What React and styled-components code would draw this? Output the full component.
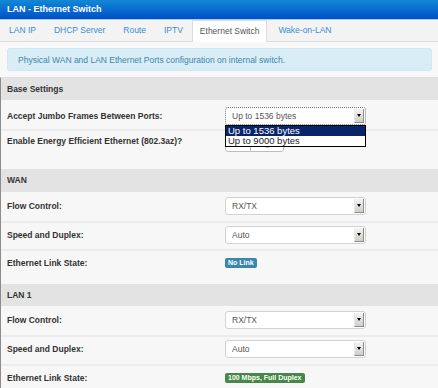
import React from 'react'
import styled, { createGlobalStyle } from 'styled-components'

const GlobalStyle = createGlobalStyle`
  body {
    margin: 0;
    background: #f8f8f8;
    font-family: 'Liberation Sans', Arial, sans-serif;
  }
`

const Page = styled.div`
  width: 438px;
  height: 388px;
  overflow: hidden;
  background: #f8f8f8;
`

const TitleBar = styled.div`
  height: 19px;
  line-height: 19px;
  padding-left: 7px;
  color: #fff;
  font-size: 9px;
  font-weight: bold;
  background: linear-gradient(#1288d6, #0050c8);
  border-bottom: 1px solid #a9cdf2;
`

const Tabs = styled.div`
  display: flex;
  align-items: flex-end;
  height: 22px;
  box-sizing: border-box;
  background: #f3f3f3;
  border-bottom: 1px solid #dcdcdc;
`

const Tab = styled.div`
  height: ${(p) => (p.$active ? '22px' : '21px')};
  line-height: 21px;
  padding: 0 ${(p) => (p.$active ? '7px' : '9px')};
  margin: ${(p) => (p.$active ? '0 2px -1px 0' : '0')};
  box-sizing: border-box;
  font-size: 8.5px;
  color: ${(p) => (p.$active ? '#555' : '#3b8dcf')};
  background: ${(p) => (p.$active ? '#fff' : 'transparent')};
  border: ${(p) => (p.$active ? '1px solid #dcdcdc' : 'none')};
  border-bottom: none;
`

const AlertWrap = styled.div`
  padding: 6px 6px 6px 7px;
`

const Alert = styled.div`
  height: 23px;
  line-height: 23px;
  box-sizing: border-box;
  padding: 0 10px;
  background: #d9edf7;
  border: 1px solid #cfe8f3;
  border-radius: 3px;
  color: #3a87ad;
  font-size: 8.5px;
`

const Settings = styled.div`
  border-left: 1px solid #8c8c8c;
  border-top: 1px solid #e0e0e0;
`

const SectionHead = styled.div`
  height: ${(p) => p.$h}px;
  line-height: ${(p) => p.$h}px;
  padding-left: 6px;
  background: #e3e3e3;
  color: #333;
  font-size: 8.5px;
  font-weight: bold;
`

const Row = styled.div`
  display: flex;
  align-items: flex-start;
  height: ${(p) => p.$h}px;
  box-sizing: border-box;
  padding: ${(p) => p.$pad ?? 5}px 0 0 6px;
  background: #f7f7f7;
  border-top: ${(p) => (p.$first ? 'none' : '2px solid #ececec')};
`

const Label = styled.div`
  width: 218px;
  flex: none;
  line-height: 18px;
  color: #333;
  font-size: 8.5px;
  font-weight: bold;
`

const Value = styled.div`
  position: relative;
  display: flex;
  align-items: center;
  min-height: 18px;
`

const SelectBox = styled.div`
  display: flex;
  width: 141px;
  height: 18px;
  box-sizing: border-box;
  padding: 1px;
  background: #fff;
  border: 1px ${(p) => (p.$focused ? 'dotted #777' : 'solid #d2d2d2')};
  border-radius: 3px;
`

const SelectText = styled.div`
  flex: 1;
  padding-left: 5px;
  line-height: 14px;
  color: #555;
  font-size: 8.5px;
`

const Arrow = styled.div`
  display: flex;
  align-items: center;
  justify-content: center;
  width: 8px;
  background: linear-gradient(#f4f4f4, #d0cec8);
  border-left: 1px solid #e8e8e8;
  border-right: 1px solid #8c8c8c;
  border-bottom: 1px solid #8c8c8c;
  &::after {
    content: '';
    border-left: 2.5px solid transparent;
    border-right: 2.5px solid transparent;
    border-top: 3px solid #000;
  }
`

const List = styled.div`
  position: absolute;
  top: 18px;
  left: 0;
  z-index: 2;
  width: 141px;
  box-sizing: border-box;
  background: #fff;
  border: 1px solid #000;
  font-size: 9.5px;
`

const Option = styled.div`
  height: 10px;
  line-height: 10px;
  padding-left: 2px;
  color: ${(p) => (p.$selected ? '#fff' : '#222')};
  background: ${(p) => (p.$selected ? '#0a246a' : '#fff')};
`

const BtnGroup = styled.div`
  display: flex;
`

const Btn = styled.div`
  display: flex;
  align-items: flex-end;
  justify-content: center;
  padding-bottom: 3px;
  width: ${(p) => p.$w}px;
  height: 20px;
  box-sizing: border-box;
  background: #fff;
  border: 1px solid #bdbdbd;
  margin-left: ${(p) => (p.$right ? '-1px' : '0')};
  border-radius: ${(p) => (p.$right ? '0 3px 3px 0' : '3px 0 0 3px')};
`

const Badge = styled.span`
  display: inline-block;
  height: 10px;
  line-height: 10px;
  padding: 0 3px;
  border-radius: 2px;
  background: ${(p) => (p.$ok ? '#468847' : '#3a87ad')};
  color: #fff;
  font-size: 7px;
  font-weight: bold;
`

function Select({ value, focused, options }) {
  return (
    <>
      <SelectBox $focused={focused}>
        <SelectText>{value}</SelectText>
        <Arrow />
      </SelectBox>
      {options && (
        <List>
          {options.map((o) => (
            <Option key={o} $selected={o === value}>
              {o}
            </Option>
          ))}
        </List>
      )}
    </>
  )
}

function PortSection({ title, headH, rowH, link, ok }) {
  return (
    <>
      <SectionHead $h={headH}>{title}</SectionHead>
      <Row $h={rowH[0]} $first>
        <Label>Flow Control:</Label>
        <Value>
          <Select value="RX/TX" />
        </Value>
      </Row>
      <Row $h={rowH[1]} $pad={3}>
        <Label>Speed and Duplex:</Label>
        <Value>
          <Select value="Auto" />
        </Value>
      </Row>
      <Row $h={35} $pad={3}>
        <Label>Ethernet Link State:</Label>
        <Value>
          <Badge $ok={ok}>{link}</Badge>
        </Value>
      </Row>
    </>
  )
}

const tabs = ['LAN IP', 'DHCP Server', 'Route', 'IPTV', 'Ethernet Switch', 'Wake-on-LAN']

export default function App() {
  return (
    <Page>
      <GlobalStyle />
      <TitleBar>LAN - Ethernet Switch</TitleBar>
      <Tabs>
        {tabs.map((t) => (
          <Tab key={t} $active={t === 'Ethernet Switch'}>
            {t}
          </Tab>
        ))}
      </Tabs>
      <AlertWrap>
        <Alert>Physical WAN and LAN Ethernet Ports configuration on internal switch.</Alert>
      </AlertWrap>

      <Settings>
        <SectionHead $h={22}>Base Settings</SectionHead>
        <Row $h={29} $pad={7} $first>
          <Label>Accept Jumbo Frames Between Ports:</Label>
          <Value>
            <Select
              focused
              value="Up to 1536 bytes"
              options={['Up to 1536 bytes', 'Up to 9000 bytes']}
            />
          </Value>
        </Row>
        <Row $h={40} $pad={1}>
          <Label>Enable Energy Efficient Ethernet (802.3az)?</Label>
          <Value>
            <BtnGroup>
              <Btn $w={26}>
                <svg width="8" height="8" viewBox="0 0 8 8">
                  <path d="M1 4l2 2 4-4" fill="none" stroke="#888" strokeWidth="1.4" />
                </svg>
              </Btn>
              <Btn $w={34} $right>
                <svg width="8" height="8" viewBox="0 0 8 8">
                  <circle cx="4" cy="4" r="3" fill="none" stroke="#999" strokeWidth="1.3" />
                </svg>
              </Btn>
            </BtnGroup>
          </Value>
        </Row>

        <PortSection title="WAN" headH={23} rowH={[29, 28]} link="No Link" />
        <PortSection
          title="LAN 1"
          headH={22}
          rowH={[29, 29]}
          link="100 Mbps, Full Duplex"
          ok
        />
      </Settings>
    </Page>
  )
}
